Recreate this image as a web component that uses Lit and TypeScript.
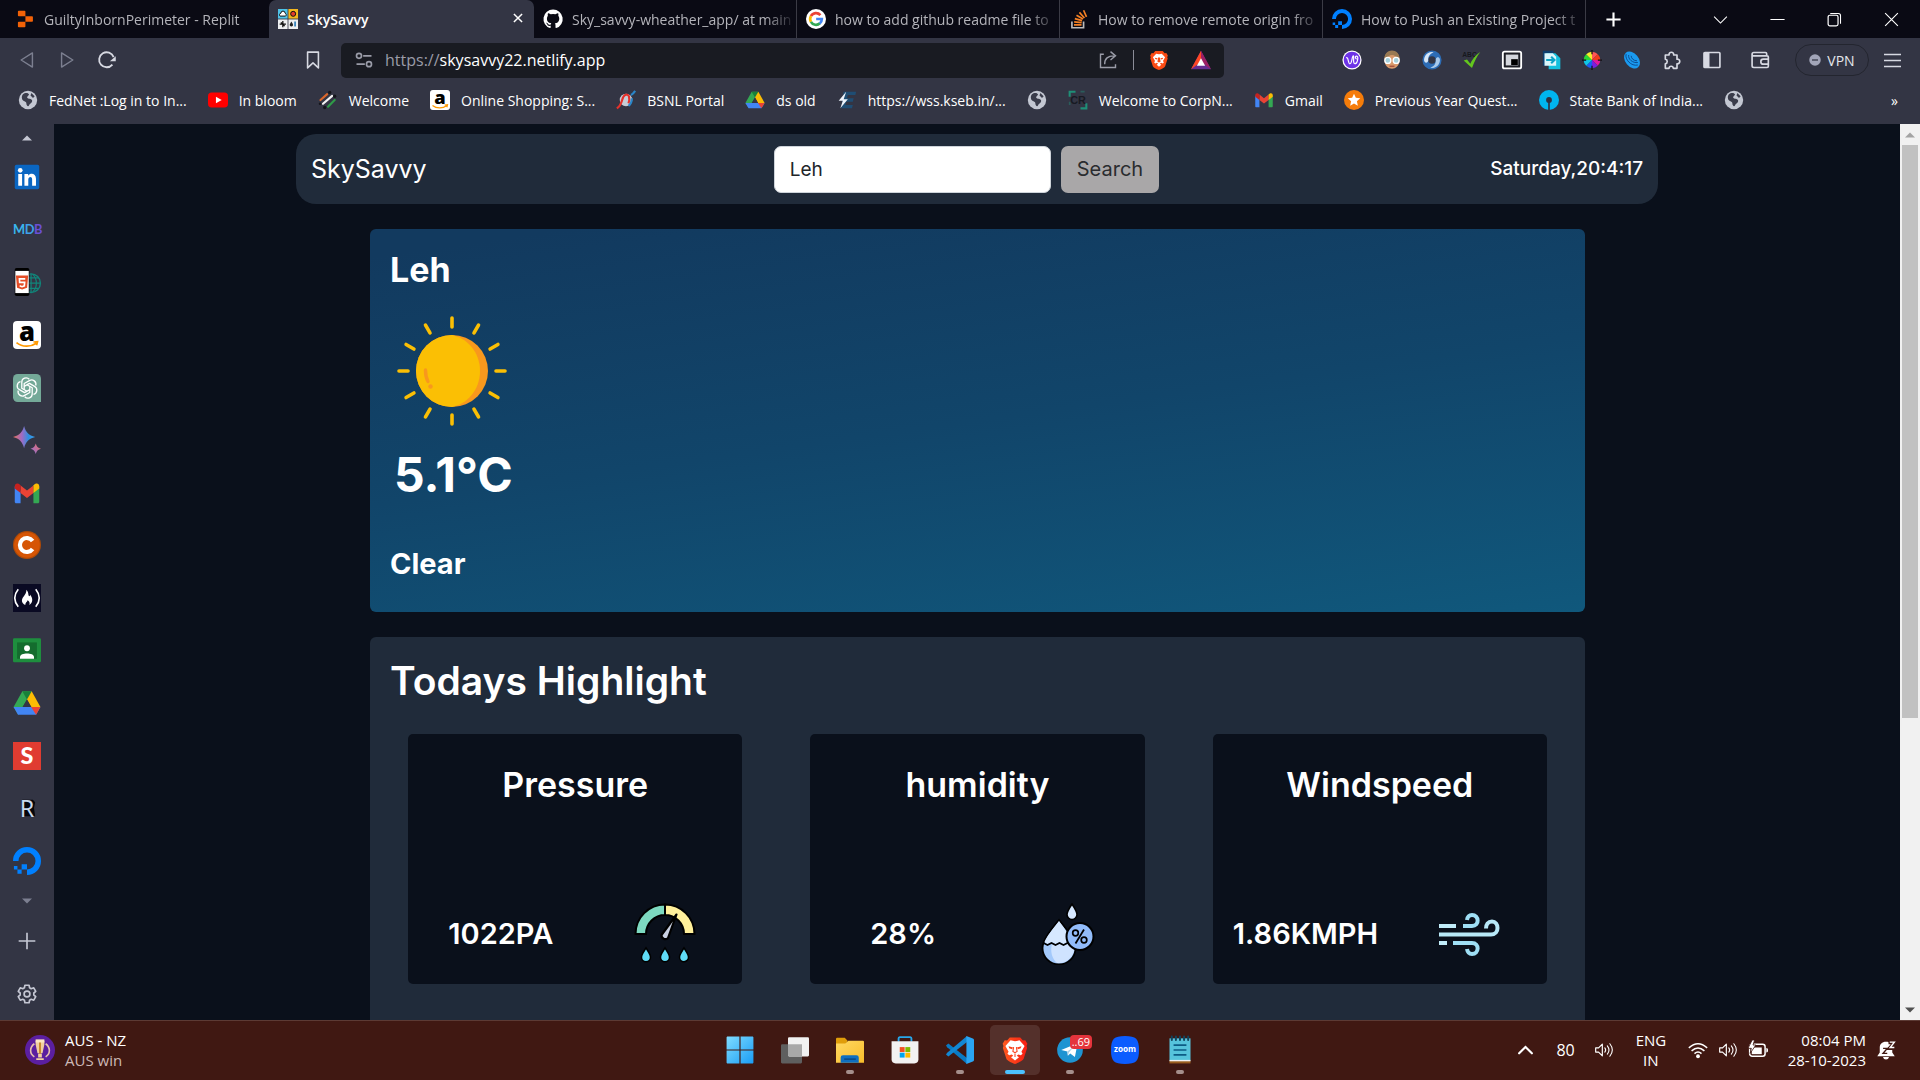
import { LitElement, html, svg, css, nothing } from "lit";
import { customElement, property } from "lit/decorators.js";

/* ---------- icon library: every entry is drawn in a 24 x 24 box ---------- */
const globe = svg`<circle cx="12" cy="12" r="11" fill="#c3c7d2"/><path d="M6 5c2-2 6-2 7 0 1 1-2 2-2 4s6 1 6 4-3 3-4 6c-1 1-3 0-3-3s-4-2-5-5 0-5 1-6Z" fill="#3a3c4b"/><path d="M16 3.500l4 4-2 2-3-3Z" fill="#3a3c4b"/>`;
const amazon = svg`<rect width="24" height="24" rx="3.500" fill="#fff"/><text x="12" y="17" font-size="22" font-weight="800" text-anchor="middle" fill="#000" font-family="Open Sans, sans-serif">a</text><path d="M3 18.500c5 4 12 4 17 .5M17.500 18l3.500-.3-.8 3" fill="none" stroke="#f90" stroke-width="1.500"/>`;
const drive = svg`<path d="M8 2h8l-8 14-3.500 6L.5 15.500Z" fill="#34a853"/><path d="M8 2h8l-4 7Z" fill="#188038"/><path d="M16 2l7.500 13.500h-8L12 9Z" fill="#fbbc04"/><path d="M.5 15.500h23L19.800 22H4.300Z" fill="#4285f4"/><path d="M15.500 15.500h8L19.800 22Z" fill="#ea4335"/><path d="M12 9l3.800 6.500H8.200Z" fill="#333544"/>`;
const gmail = svg`<path d="M1.500 6.500v13c0 .8.500 1.300 1.300 1.300H6.500V10Z" fill="#4285f4"/><path d="M22.500 6.500v13c0 .8-.5 1.300-1.300 1.300H17.500V10Z" fill="#34a853"/><path d="M6.500 5.500 12 9.800l5.500-4.300V12L12 16.200 6.500 12Z" fill="#ea4335"/><path d="M1.500 6.300C1.500 3.500 4.400 2.800 6.500 5.500V12l-5-3.800Z" fill="#c5221f"/><path d="M22.500 6.300c0-2.800-2.900-3.500-5-.8V12l5-3.800Z" fill="#fbbc04"/>`;
const ocean = svg`<path d="M12 24v-4.700A7.300 7.300 0 1 0 4.700 12H0A12 12 0 1 1 12 24Z" fill="#0080ff"/><path d="M7.400 14.700H12v4.600H7.400ZM3.800 19.300h3.600v3.600H3.800ZM.8 16.200h3v3.100h-3Z" fill="#0080ff"/>`;
const braveShape = "M7.500 1.200h9l2.300 2.600 2-.2 1.800 3-.7 2 .5 1.700-3 9.200c-.5 1.400-4 3.300-7.400 4.500-3.400-1.200-6.900-3.100-7.400-4.500l-3-9.200.5-1.700-.7-2 1.800-3 2 .2Z";
const brave = svg`<path d=${braveShape} fill="#fb4b14"/><path d="M12 5.200l3.300-.7 4 4.300-2.500 4.500 1 1.700-1.200 1.200-2.200-.8-1.300 1.100 1.700 1.300-2.800 2.300-2.800-2.300 1.700-1.300-1.300-1.100-2.200.8-1.200-1.200 1-1.700-2.500-4.500 4-4.300Z" fill="#fff"/><path d="M7 9.200l3.300.8-.8 1.300-2-.5ZM17 9.200l-3.300.8.8 1.300 2-.5ZM10.900 9h2.200l.8 5-1.900 1-1.900-1Z" fill="#fb4b14"/>`;
const speaker = svg`<path d="M2 9.500h3.500L10 5v14l-4.500-4.500H2Z" fill="none" stroke="currentColor" stroke-width="1.400" stroke-linejoin="round"/><path d="M13 9.500q2 2.500 0 5M16 7q4 5 0 10M19 4.500q6 7.500 0 15" fill="none" stroke="currentColor" stroke-width="1.300" stroke-linecap="round"/>`;

const ICONS: Record<string, unknown> = {
  globe, amazon, drive, gmail, ocean, brave, speaker,
  replit: svg`<path d="M4.500 2h7c.6 0 1 .4 1 1v5.700h-8c-.6 0-1-.4-1-1V3c0-.6.400-1 1-1ZM12.500 8.700h8c.6 0 1 .4 1 1v4.700c0 .6-.4 1-1 1h-8ZM4.500 15.400h8V21c0 .6-.4 1-1 1h-7c-.6 0-1-.4-1-1v-4.700c0-.6.400-.9 1-.9Z" fill="#f26207"/>`,
  savvy: svg`<rect x="0" y="0" width="11.500" height="11.500" fill="#4fc3e8"/><rect x="12.500" y="0" width="11.500" height="11.500" fill="#f3b61f"/><rect y="12.500" width="11.500" height="11.500" fill="#eef0f2"/><rect x="12.500" y="12.500" width="11.500" height="11.500" fill="#eef0f2"/><path d="M2.500 8.500a2 2 0 0 1 1-3.500 2.500 2.500 0 0 1 5 0 2 2 0 0 1 .5 3.500Z" fill="#fff" stroke="#111" stroke-width="1.200"/><circle cx="18.200" cy="5.800" r="3" fill="#e53a2a" stroke="#111" stroke-width="1.200"/><path d="M5.800 14.500v7.500M2 18.200h7.500M3.500 16l4.500 4.500" stroke="#111" stroke-width="1.500"/><path d="M16 15l1.800 3a2 2 0 1 1-3.500 0Z" fill="#222"/><path d="M20.500 15v6" stroke="#2b7db8" stroke-width="2"/>`,
  github: svg`<path d="M12 .5A11.500 11.500 0 0 0 8.400 22.900c.6.100.8-.3.800-.6v-2.100c-3.200.7-3.900-1.400-3.900-1.400-.5-1.300-1.300-1.700-1.300-1.700-1-.7.100-.7.100-.7 1.200.1 1.800 1.200 1.800 1.200 1 1.800 2.700 1.300 3.400 1 .1-.8.400-1.300.7-1.600-2.600-.3-5.300-1.300-5.300-5.700 0-1.300.5-2.300 1.200-3.100-.1-.3-.5-1.500.1-3.100 0 0 1-.3 3.200 1.200a11 11 0 0 1 5.800 0c2.200-1.500 3.200-1.200 3.200-1.200.6 1.600.2 2.800.1 3.100.8.800 1.200 1.900 1.200 3.100 0 4.500-2.700 5.400-5.300 5.700.4.400.8 1.100.8 2.200v3.100c0 .3.200.7.800.6A11.500 11.500 0 0 0 12 .5Z" fill="#fff"/>`,
  google: svg`<circle cx="12" cy="12" r="12" fill="#fff"/><g fill="none" stroke-width="3.200"><path d="M17.300 7.300A7 7 0 0 0 5.900 8.600" stroke="#ea4335"/><path d="M5.900 8.600a7 7 0 0 0 0 6.800" stroke="#fbbc04"/><path d="M5.900 15.400A7 7 0 0 0 16.700 17.200" stroke="#34a853"/><path d="M16.500 17.300A7 7 0 0 0 19 12h-6.800" stroke="#4285f4"/></g>`,
  stack: svg`<path d="M3.500 15v7.500h14V15" fill="none" stroke="#bcbbbb" stroke-width="2"/><path d="M6 19h9M6.200 15.500l9 .9M7 11.500l8.700 2.400M9 7.500l7.800 4.500M12.500 4l6 6.800M17.500 1.500l3.500 8" stroke="#f48024" stroke-width="2"/>`,
  close: svg`<path d="M5 5l14 14M19 5 5 19" stroke="currentColor" stroke-width="2.600"/>`,
  plus: svg`<path d="M12 2v20M2 12h20" stroke="currentColor" stroke-width="3"/>`,
  thinPlus: svg`<path d="M12 2v20M2 12h20" stroke="currentColor" stroke-width="2"/>`,
  chevDown: svg`<path d="M3 8l9 9 9-9" fill="none" stroke="currentColor" stroke-width="1.500"/>`,
  chevUp: svg`<path d="M3 16l9-9 9 9" fill="none" stroke="currentColor" stroke-width="3" stroke-linecap="round"/>`,
  minimise: svg`<path d="M2 12h20" stroke="currentColor" stroke-width="1.500"/>`,
  restore: svg`<rect x="3" y="6" width="14" height="15" rx="2.500" fill="none" stroke="currentColor" stroke-width="1.700"/><path d="M6 3.500h11.500a3 3 0 0 1 3 3V18" fill="none" stroke="currentColor" stroke-width="1.500"/>`,
  shut: svg`<path d="M3 3l18 18M21 3 3 21" stroke="currentColor" stroke-width="1.600"/>`,
  back: svg`<path d="M18.500 3.500v17L5 12Z" fill="none" stroke="currentColor" stroke-width="1.700" stroke-linejoin="round"/>`,
  forward: svg`<path d="M5.500 3.500v17L19 12Z" fill="none" stroke="currentColor" stroke-width="1.700" stroke-linejoin="round"/>`,
  reload: svg`<path d="M18.500 17.500A9 9 0 1 1 20 8.500" fill="none" stroke="currentColor" stroke-width="2.200"/><path d="M22.500 7.500v6h-7Z" fill="currentColor"/>`,
  bookmark: svg`<path d="M5.500 2.500h13v19L12 15.500l-6.500 6Z" fill="none" stroke="currentColor" stroke-width="1.900" stroke-linejoin="round"/>`,
  site: svg`<g fill="none" stroke="currentColor" stroke-width="2"><circle cx="6" cy="7" r="3"/><path d="M11 7h10M3 17h10"/><circle cx="18" cy="17" r="3"/></g>`,
  share: svg`<g fill="none" stroke="currentColor" stroke-width="1.700"><path d="M7 5H3v16h18v-4"/><path d="M8 17c0-7 4-10 11-10M15 2l6 5-6 5"/></g>`,
  bat: svg`<path d="M12 1 0 23h24Z" fill="#662d91"/><path d="M12 1 0 23l12-9Z" fill="#ff4724"/><path d="M12 1l12 22-12-9Z" fill="#9e1f63"/><path d="M12 10l-5 9h10Z" fill="#fff"/>`,
  wave: svg`<circle cx="12" cy="12" r="11.500" fill="#fff"/><circle cx="12" cy="12" r="10" fill="#6d33e6"/><path d="M5 9.500c3-2 2 7 4.500 7S12 7 13.500 7s-1 9.500 2 9.500 4.500-8 2.500-9-3 2-.5 3.500" fill="none" stroke="#fff" stroke-width="1.400"/>`,
  face: svg`<path d="M3 12C2-2 22-2 21 12c0 14-18 14-18 0Z" fill="#d99a6c"/><path d="M3 11C2-3 22-3 21 11c-4-3-6-5-9-5s-5 2-9 5Z" fill="#9a7a53"/><circle cx="7" cy="12.500" r="3.600" fill="#a4d0dc" stroke="#fff" stroke-width="1.600"/><circle cx="17" cy="12.500" r="3.600" fill="#a4d0dc" stroke="#fff" stroke-width="1.600"/><path d="M9 19.500h6" stroke="#a04a3a" stroke-width="1.500"/>`,
  ring: svg`<circle cx="12" cy="12" r="8" fill="none" stroke="#2d6cb5" stroke-width="7"/><path d="M2.500 13A9.500 9.500 0 0 1 14 2.700C9 5 7 8 7.500 13c-1 3-4 3-5 0Z" fill="#d6e6f7"/><path d="M21.500 11A9.500 9.500 0 0 1 10 21.300c5-2.300 7-5.300 6.500-10.300 1-3 4-3 5 0Z" fill="#a9c9ea"/>`,
  abc: svg`<text x="9" y="8" font-size="8" font-weight="700" text-anchor="middle" fill="#16181d" font-family="Liberation Sans, sans-serif">ABC</text><path d="M2 12.500l4-1 4 5c3-6 6-10 12-14-4 5-7 11-10 19Z" fill="#63c61e"/>`,
  pip: svg`<rect x="1" y="2" width="22" height="20" rx="2" fill="#1c1d24" stroke="#fff" stroke-width="2.200"/><rect x="4.500" y="5.500" width="15" height="13" fill="#d4d6dc"/><rect x="11" y="11" width="8" height="7" fill="#000"/>`,
  sendPage: svg`<path d="M1 1h13v6h-8v12H1Z" fill="#0c3f6e"/><path d="M5 4h11l6 6v13H8V17H5Z" fill="#12c1df"/><path d="M3 4h10l4 4v11H3Z" fill="#d9f6fb"/><path d="M5 12h9M11 8l4 4-4 4" fill="none" stroke="#0aa5c8" stroke-width="2.500"/>`,
  wheel: svg`<path d="M12 12V2a10 10 0 0 1 7 3Z" fill="#f55"/><path d="M12 12l7-7a10 10 0 0 1 3 7Z" fill="#f33a1c"/><path d="M12 12h10a10 10 0 0 1-3 7Z" fill="#e0189c"/><path d="M12 12l7 7a10 10 0 0 1-7 3Z" fill="#7a1fe0"/><path d="M12 12v10a10 10 0 0 1-7-3Z" fill="#1b5cf0"/><path d="M12 12l-7 7a10 10 0 0 1-3-7Z" fill="#10c6e6"/><path d="M12 12H2a10 10 0 0 1 3-7Z" fill="#2bd834"/><path d="M12 12 5 5a10 10 0 0 1 7-3Z" fill="#f4ee2c"/><path d="M12 0v5M12 19v5M0 12h5M19 12h5" stroke="#111" stroke-width="1.500"/>`,
  dish: svg`<ellipse cx="12" cy="12" rx="11.500" ry="8" fill="#1a9af0" transform="rotate(50 12 12)"/><path d="M5 5c-2 6 6 15 14 13M8 6c-1 5 5 10 11 9M11 7c0 3 3 6 7 6" fill="none" stroke="#0c4f94" stroke-width="1.200"/>`,
  puzzle: svg`<path d="M4 6h4.500a2.800 2.800 0 1 1 5.500 0H18v5a2.800 2.800 0 1 1 0 5.500V22h-4.500a2.500 2.500 0 0 0-5 0H4v-5.500a2.800 2.800 0 0 0 0-5.500Z" fill="none" stroke="currentColor" stroke-width="2" stroke-linejoin="round"/>`,
  panel: svg`<rect x="2.500" y="3" width="19" height="18" rx="1" fill="none" stroke="currentColor" stroke-width="2"/><path d="M2 3h7v18H2Z" fill="currentColor"/>`,
  wallet: svg`<g fill="none" stroke="currentColor" stroke-width="2"><path d="M20 7V4.500A1.500 1.500 0 0 0 18.500 3H4.500a2 2 0 0 0 0 4H20.500a1.500 1.500 0 0 1 1.500 1.500v11a1.500 1.500 0 0 1-1.500 1.500h-16A2 2 0 0 1 2.500 19V5"/><path d="M22 11h-6a3 3 0 0 0 0 6h6"/></g>`,
  vpnDot: svg`<circle cx="12" cy="12" r="11.500" fill="#a2a5b8"/><path d="M6 12h12" stroke="#333544" stroke-width="2.500"/>`,
  menu: svg`<path d="M0 3.500h24M0 12h24M0 20.500h24" stroke="currentColor" stroke-width="2"/>`,
  youtube: svg`<rect x="0" y="3" width="24" height="18" rx="4.500" fill="#f00"/><path d="M9.500 8l7 4-7 4Z" fill="#fff"/>`,
  bars: svg`<g stroke-linecap="round" stroke-width="2.600"><path d="M3 12 11 5" stroke="#d9662b"/><path d="M6 16.500 17 7" stroke="#f3f3f3"/><path d="M12 20l8-8" stroke="#2f9a48"/></g><circle cx="14" cy="3" r="2" fill="#15161c"/><circle cx="20" cy="7.500" r="2" fill="#15161c"/><circle cx="8" cy="21" r="2" fill="#15161c"/><circle cx="2.500" cy="16.500" r="1.600" fill="#15161c"/>`,
  bsnl: svg`<circle cx="12" cy="12" r="7.500" fill="#c6ccd6"/><path d="M1 22C9 17 6 8 11 6c5-2 6 4 4 10" fill="none" stroke="#e3312b" stroke-width="2.600"/><path d="M23 1c-2 3-3 4-5 5M15 19c3-2 4-5 4-9" fill="none" stroke="#2a86c9" stroke-width="2.600"/>`,
  kseb: svg`<path d="M8 2h15l-1 4h-9l-1 4h8l-1 4h-8l-1 4h9l-1 4H5Z" fill="#1f4d73"/><path d="M11 2 2 13h5L4 22l9-11H8Z" fill="#eef4fb"/>`,
  corp: svg`<path d="M2 8V2h7M22 16v6h-7" fill="none" stroke="#1f8f77" stroke-width="2.500"/><path d="M15 2h5M2 14v4" stroke="#2a5c5b" stroke-width="2"/><text x="12" y="17" font-size="13" font-weight="700" text-anchor="middle" fill="#171a22" font-family="Liberation Sans, sans-serif">CR</text>`,
  star: svg`<circle cx="12" cy="12" r="12" fill="#f57c0a"/><path d="M12 4.500l2.200 4.900 5.300.6-4 3.600 1.100 5.300L12 16.200l-4.600 2.700 1.100-5.300-4-3.600 5.300-.6Z" fill="#fff"/>`,
  sbi: svg`<circle cx="12" cy="12" r="12" fill="#00b5ef"/><circle cx="12" cy="12" r="3.500" fill="#2f3142"/><path d="M11 13h2v11h-2Z" fill="#2f3142"/>`,
  linkedin: svg`<rect x="1.500" y="1.500" width="21" height="21" rx="1.500" fill="#0a66c2"/><circle cx="6.200" cy="6.300" r="2" fill="#fff"/><path d="M4.500 9.500h3.300v10H4.500ZM9.800 9.500H13v1.400c1.800-2.600 6.700-2.200 6.700 2.600v6h-3.300v-5.300c0-3-3.300-2.600-3.300 0v5.300H9.800Z" fill="#fff"/>`,
  mdb: svg`<g font-size="11" font-weight="700" font-family="Liberation Sans Narrow, Lato, sans-serif"><text x="0" y="15" fill="#39b6ee">M</text><text x="10" y="15" fill="#3fa0ea">D</text><text x="18" y="15" fill="#6a4fd6">B</text></g>`,
  html5: svg`<circle cx="15.500" cy="13" r="8" fill="none" stroke="#11857a" stroke-width="1.200"/><path d="M15.500 5v16M8 13h15.500M17 5.500c4 4 4 11 0 15M10 8.500h12M10 17.500h12" fill="none" stroke="#11857a" stroke-width="1"/><rect x="1.500" y="0" width="12.500" height="24" rx="1.500" fill="#000"/><rect x="2" y="2.500" width="11.500" height="19" fill="#fff"/><path d="M2.500 6.500h10.500l-.9 10.500-4.300 1.500L3.500 17Z" fill="#e44d26"/><path d="M10.500 9.300H5.500l.2 3h4.300l-.3 3-2 .7-2-.7" fill="none" stroke="#fff" stroke-width="1.400"/>`,
  gpt: svg`<path d="M4 0h16a4 4 0 0 1 4 4v20H4a4 4 0 0 1-4-4V4a4 4 0 0 1 4-4Z" fill="#74a998"/><g fill="none" stroke="#fff" stroke-width="1.100" stroke-linejoin="round">${[0, 60, 120, 180, 240, 300].map(a => svg`<path d="M9.600 13.400V8.200L14 5.700a3.700 3.700 0 0 1 5.500 4.200" transform=${`rotate(${a} 12 12)`}/>`)}</g>`,
  spark: svg`<defs><linearGradient id="sp" x1="0" y1="0" x2="1" y2="0"><stop offset="0" stop-color="#e8705a"/><stop offset=".4" stop-color="#a06bc4"/><stop offset=".7" stop-color="#2f8fe0"/><stop offset="1" stop-color="#3aa0ee"/></linearGradient><linearGradient id="sq" x1="0" y1="1" x2="1" y2="0"><stop offset="0" stop-color="#8a72e0"/><stop offset="1" stop-color="#ef6b62"/></linearGradient></defs><path d="M9.500 0c1.500 5.500 4 8 9.500 9.500-5.500 1.500-8 4-9.500 9.500C8 13.500 5.500 11 0 9.500 5.500 8 8 5.500 9.500 0Z" fill="url(#sp)"/><path d="M19.500 15c.8 2.800 1.800 3.800 4.500 4.500-2.700.8-3.700 1.800-4.500 4.500-.8-2.700-1.800-3.700-4.500-4.500 2.700-.7 3.700-1.700 4.500-4.500Z" fill="url(#sq)"/>`,
  cred: svg`<circle cx="12" cy="12" r="12" fill="#b04a06"/><circle cx="12" cy="12" r="11" fill="#d65505"/><path d="M16.800 8.500A6 6 0 1 0 16.800 15.500" fill="none" stroke="#fff" stroke-width="3.600"/>`,
  fcc: svg`<rect width="24" height="24" fill="#0a0a23"/><path d="M4.500 4.500q-6 7.500 0 15M19.500 4.500q6 7.500 0 15" fill="none" stroke="#fff" stroke-width="1.400"/><path d="M11.500 5c2.500 3 1 4.500 2.500 5.500 1-.5.500-1.500.5-1.500 3 3.500 2.500 7-.5 9 .8-2-.3-3.300-1.500-4-.3 1.500-2 2-2 4C7 16.500 7 13.500 9 11c1.500-2 2.500-3.500 2.500-6Z" fill="#fff"/>`,
  classroom: svg`<rect x="0" y="2" width="24" height="20.500" rx="1" fill="#1e8e3e"/><rect x="3.500" y="5.500" width="17" height="14" fill="#146c2e"/><circle cx="12" cy="10.500" r="2.500" fill="#fff"/><path d="M6 19.500v-1.500c0-4 12-4 12 0v1.500Z" fill="#fff"/>`,
  sTile: svg`<rect width="24" height="24" fill="#e03c31"/><text x="12" y="19.200" font-size="20" font-weight="900" text-anchor="middle" fill="#fff" font-family="Lato, sans-serif">S</text>`,
  rTile: svg`<path d="M8 5h9l2 2-1 5 1 7H8Z" fill="#05060a"/><text x="12" y="19.500" font-size="20" text-anchor="middle" fill="#c9d9ee" font-family="Noto Sans, sans-serif">R</text>`,
  gear: svg`<g fill="none" stroke="currentColor" stroke-width="2" stroke-linejoin="round"><path d="M9.500 1.500h5l.6 3 2 1.200 3-1.100 2.400 4.200-2.300 2v2.400l2.300 2-2.400 4.200-3-1.100-2 1.200-.6 3h-5l-.6-3-2-1.200-3 1.100L1.500 15.200l2.300-2v-2.400l-2.300-2 2.400-4.200 3 1.100 2-1.200Z"/><circle cx="12" cy="12" r="3.500"/></g>`,
  triUp: svg`<path d="M12 7l10 10H2Z" fill="currentColor"/>`,
  triDown: svg`<path d="M12 17l10-10H2Z" fill="currentColor"/>`,
  cup: svg`<circle cx="12" cy="12" r="12" fill="#5b1fa0"/><path d="M8.500 4.500h7v3l-1.500 7h-4l-1.500-7ZM10.500 15h3v3h-3ZM9 18.500h6v1.500H9Z" fill="#f0cfa0"/><path d="M8.500 3.500h7V6h-7Z" fill="#fbe6c0"/><path d="M12 6v9" stroke="#c98a2e" stroke-width="1.600"/><path d="M7.500 7c-4 3-4 8 0 10.500M16.500 7c4 3 4 8 0 10.500" fill="none" stroke="#e5bfae" stroke-width="1.300"/>`,
  windows: svg`<defs><linearGradient id="wn" x1="0" y1="0" x2="1" y2="1"><stop offset="0" stop-color="#7fdcff"/><stop offset="1" stop-color="#1a9df5"/></linearGradient></defs><path d="M1 .5h10.500v11H.5V1ZM12.500 .5H23l.5.500v10.500h-11ZM.5 12.500h11v11H1l-.5-.5ZM12.500 12.500h11V23l-.5.500H12.500Z" fill="url(#wn)"/>`,
  taskview: svg`<rect x="0" y="7" width="18" height="16.500" rx="1" fill="#5f5f5f"/><rect x="6" y="1" width="18" height="16.500" rx="1" fill="#f1f1f1"/><path d="M6 7h12v10.500H7a1 1 0 0 1-1-1Z" fill="#a8a8a8"/>`,
  folder: svg`<defs><linearGradient id="fo" x1="0" y1="0" x2="1" y2="1"><stop offset="0" stop-color="#ffd862"/><stop offset="1" stop-color="#f9bd2b"/></linearGradient></defs><path d="M0 2.500a1 1 0 0 1 1-1h6.500l2.500 2.500-2 4H0Z" fill="#e09d0a"/><path d="M0 6.500h8L10.500 4H23a1 1 0 0 1 1 1v18H0Z" fill="url(#fo)"/><path d="M4 23v-4.500a2 2 0 0 1 2-2h11.500a2 2 0 0 1 2 2V23Z" fill="#0f6fc0"/><path d="M7 19.800h10" stroke="#083d72" stroke-width="1"/>`,
  store: svg`<path d="M6.500 5V2.200A1.200 1.200 0 0 1 7.500 1h9a1.200 1.200 0 0 1 1 1.200V5" fill="none" stroke="#27a7ea" stroke-width="1.600"/><path d="M.5 4.500h23V20a3.500 3.500 0 0 1-3.500 3.500H4A3.500 3.500 0 0 1 .5 20Z" fill="#f2f2f2"/><path d="M7.500 9.500h4.200v4.200H7.500Z" fill="#f25022"/><path d="M12.300 9.500h4.200v4.200h-4.200Z" fill="#7fba00"/><path d="M7.500 14.300h4.200v4.200H7.500Z" fill="#00a4ef"/><path d="M12.300 14.300h4.200v4.200h-4.200Z" fill="#ffb900"/>`,
  vscode: svg`<path d="M0 8.200 2 6.500l16 12.300V24L1 9.600Z" fill="#0a7ac4"/><path d="M0 15.800 2 17.500 18 5.200V0L1 14.400Z" fill="#1287d3"/><path d="M17.500 0 23 2.200a1.500 1.500 0 0 1 1 1.300v17a1.500 1.500 0 0 1-1 1.300L17.500 24Z" fill="#2aa5f3"/>`,
  braveBig: svg`<defs><linearGradient id="bv" x1="0" y1="0" x2="1" y2="0"><stop offset="0" stop-color="#ff5a1f"/><stop offset="1" stop-color="#f81b12"/></linearGradient></defs><path d=${braveShape} fill="url(#bv)"/><path d="M12 4.600l3.800-.9 4.400 4.800-2.700 5 1 1.700-1.500 1.400-2.200-.8-1.300 1.100 1.900 1.400L12 21l-3.400-2.700 1.900-1.400-1.300-1.100-2.200.8-1.500-1.400 1-1.700-2.700-5 4.400-4.800Z" fill="#fff"/><path d="M6.500 8.800l3.800 1-.8 1.500-2.500-.7ZM17.500 8.800l-3.800 1 .8 1.500 2.500-.7Z" fill="#f8401a"/><path d="M10.800 9.500l-.6 3.800 1.800 1 1.800-1-.6-3.800M12 15v3" fill="none" stroke="#f8401a" stroke-width=".9"/>`,
  telegram: svg`<circle cx="12" cy="12" r="11" fill="#1f94d2"/><path d="M4.500 12 18.500 6.300 16.200 18l-4-3-2 2-.5-3.800Z" fill="#fff"/><path d="M9.700 13.200 15.500 9l-4.500 5.200-.8 2.800Z" fill="#a9cfe6"/>`,
  zoomApp: svg`<path d="M12 0c9.500 0 12 2.500 12 12s-2.500 12-12 12S0 21.500 0 12 2.500 0 12 0Z" fill="#0b5cff"/><text x="12" y="14" font-size="7" font-weight="700" text-anchor="middle" fill="#fff" font-family="Open Sans, sans-serif">zoom</text>`,
  notepad: svg`<path d="M3 21h18v2.500H3Z" fill="#9a5c1d"/><path d="M3 2h18v19H3Z" fill="#56c3dc"/><path d="M3 20.500h18v1.200H3Z" fill="#f2f2f2"/><path d="M6.500 7.800h11M6.500 12h11M6.500 16.200h11" stroke="#0d5c85" stroke-width="1.400"/><path d="M5 .5v3M8.500 .5v3M12 .5v3M15.500 .5v3M19 .5v3" stroke="#12435c" stroke-width="1.700" stroke-linecap="round"/>`,
  wifi: svg`<g fill="none" stroke="currentColor" stroke-width="1.800"><path d="M1 9.500q11-10 22 0"/><path d="M4.300 13q7.700-7 15.400 0"/><path d="M7.800 16.300q4.200-3.800 8.400 0"/></g><circle cx="12" cy="19.500" r="2.300" fill="currentColor"/>`,
  battery: svg`<rect x="2" y="5" width="18.500" height="14.500" rx="3" fill="none" stroke="currentColor" stroke-width="1.800"/><path d="M22 9.500c1.500 0 2 1 2 2.800S23.500 15 22 15Z" fill="currentColor"/><path d="M4.500 9h12v8h-12Z" fill="currentColor"/><path d="M5 0 0 10h4l-1.500 6L9.500 6H6l2-6Z" fill="currentColor" stroke="#401812" stroke-width="1"/>`,
  bell: svg`<path d="M12 2c-5 0-7.500 3-7.500 7v6L1.500 19.500h21l-3-4.500V9C19.500 5 17 2 12 2Z" fill="currentColor"/><path d="M8.500 20.500h7c-.5 4-6.500 4-7 0Z" fill="currentColor"/><path d="M15 3h7l-6 7h6" fill="none" stroke="#401812" stroke-width="4"/><path d="M16.500 2.500H22l-5 6.500h5" fill="none" stroke="currentColor" stroke-width="1.700"/><path d="M8.500 10h5l-5 6h5" fill="none" stroke="#401812" stroke-width="1.700"/>`,
};

@customElement("ui-icon")
export class UiIcon extends LitElement {
  @property() name = "";
  static styles = css`
    :host { display: inline-flex; flex: none; width: 20px; height: 20px; }
    svg { display: block; width: 100%; height: 100%; overflow: visible; }
  `;
  render() {
    return html`<svg viewBox="0 0 24 24" aria-hidden="true">${ICONS[this.name] ?? nothing}</svg>`;
  }
}

/* ---------- weather drawings ---------- */
const drop = (x: number, y: number) =>
  svg`<path d=${`M${x} ${y}c2.500 4 4.500 6.500 4.500 9.200a4.500 4.500 0 0 1-9 0c0-2.700 2-5.200 4.500-9.200Z`} fill="#5fdcf7" stroke="#000" stroke-width="1.500"/>`;

const WEATHER: Record<string, unknown> = {
  sun: svg`<svg viewBox="0 0 112 112" width="112" height="112" role="img" aria-label="Clear sky">
    <g stroke="#fbbf04" stroke-width="3.600" stroke-linecap="round">
      ${Array.from({ length: 12 }, (_, i) => svg`<path d="M56 3v9" transform=${`rotate(${i * 30} 56 56)`}/>`)}
    </g>
    <circle cx="56" cy="56" r="36" fill="#f8981d"/>
    <path d="M56 20a36 36 0 1 0 0 72c15-3 28-17 28-36S71 23 56 20Z" fill="#fbbf04"/>
    <path d="M29.500 55q0 7 2.500 11.500" fill="none" stroke="#f8981d" stroke-width="3.400" stroke-linecap="round"/>
    <circle cx="34.500" cy="71.500" r="2.200" fill="#f8981d"/></svg>`,
  pressure: svg`<svg viewBox="0 0 62 62" width="62" height="62" aria-hidden="true">
    <path d="M31 1.500A29.500 29.500 0 0 0 1.500 31H12a19 19 0 0 1 19-19Z" fill="#7dd9c0" stroke="#000" stroke-width="2"/>
    <path d="M31 1.500A29.500 29.500 0 0 1 60.500 31H50A19 19 0 0 0 31 12Z" fill="#fff09b" stroke="#000" stroke-width="2"/>
    <path d="M42.500 11.500 27.500 32a3.800 3.800 0 0 0 6.500 3Z" fill="#c8cfe0" stroke="#000" stroke-width="2.200" stroke-linejoin="round"/>
    ${drop(12, 45)}${drop(31, 45)}${drop(50, 45)}</svg>`,
  humidity: svg`<svg viewBox="0 0 62 62" width="62" height="62" aria-hidden="true">
    <path d="M22 17C13 28 5.500 37 5.500 45a16.500 16.500 0 0 0 33 0C38.500 37 31 28 22 17Z" fill="#a3c9fb" stroke="#000" stroke-width="1.800"/>
    <path d="M22 18c-7 9-12 15-14.500 21l3 2 4-2 4 2 4-2 4 2 4-2 3 1.500C33 33 28 26 22 18Z" fill="#d6e8ff"/>
    <path d="M15 41c-2 7 0 15 5 19 10 1 16-6 17.500-14l-1-5-4-1-4 1.500-4-1.500-4 1.500Z" fill="#cfe3ff"/>
    <path d="M6.500 40l4 2 4-2 4 2 4-2 4 2 4-2 4 2" fill="none" stroke="#000" stroke-width="1.600"/>
    <path d="M35 1c3 4.500 5 7.500 5 10.500a5 5 0 0 1-10 0C30 8.500 32 5.500 35 1Z" fill="#d6e8ff" stroke="#000" stroke-width="1.600"/>
    <circle cx="43" cy="33.500" r="13.500" fill="#92bcfa" stroke="#000" stroke-width="2"/>
    <circle cx="38.500" cy="30" r="2.800" fill="none" stroke="#000" stroke-width="1.700"/>
    <circle cx="47" cy="37" r="2.800" fill="none" stroke="#000" stroke-width="1.700"/>
    <path d="M47 26.500 38.500 40.500" stroke="#000" stroke-width="1.800"/></svg>`,
  wind: svg`<svg viewBox="0 0 62 62" width="62" height="62" aria-hidden="true">
    <g fill="none" stroke="#9fdff5" stroke-width="4">
      <path d="M0 23h17" stroke="#c0ecf9"/><path d="M0 31.500h52c9 0 8-13 1-13-4 0-6 3-6 7" stroke="#b8e9f8"/>
      <path d="M0 40h8" stroke="#c0ecf9"/>
      <path d="M24 23h9c8 0 7-11 0-11-3 0-4.500 2-5 5"/>
      <path d="M14 40h19c8 0 7 11 0 11-3 0-4.500-2-5-5"/></g></svg>`,
};

@customElement("metric-card")
export class MetricCard extends LitElement {
  @property() label = "";
  @property() value = "";
  @property() art = "";
  static styles = css`
    :host { display: flex; flex-direction: column; justify-content: space-between; height: 250px; border-radius: 5px; background: #0a101b; color: #fff; }
    .title { margin: 0; padding-top: 30px; text-align: center; font-size: 34px; line-height: 42px; font-weight: 600; }
    .row { display: grid; grid-template-columns: 1fr 1fr; gap: 15px; align-items: center; justify-items: center; padding: 0 2px 19px 18px; }
    .value { font-size: 29px; line-height: 36px; font-weight: 600; white-space: nowrap; }
    svg { display: block; }
  `;
  render() {
    return html`<h3 class="title">${this.label}</h3>
      <div class="row"><span class="value">${this.value}</span>${WEATHER[this.art]}</div>`;
  }
}

@customElement("sky-page")
export class SkyPage extends LitElement {
  static styles = css`
    :host { display: block; flex: 1; min-width: 0; overflow: hidden; background: #0a101b; color: #fff; font-family: Inter, "Open Sans", sans-serif; }
    .nav { display: grid; grid-template-columns: 22fr auto 23fr; align-items: center; height: 70px; margin: 10px 242px 0; padding: 0 15px; border-radius: 20px; background: #202b3a; }
    .brand { font-size: 25px; line-height: 32px; color: inherit; text-decoration: none; }
    .search { display: flex; gap: 10px; }
    .box { box-sizing: border-box; width: 277px; height: 47px; padding: 0 15px; border: 1px solid #ced4da; border-radius: 7px; background: #fff; color: #212529; font: inherit; font-size: 19px; }
    .go { height: 47px; padding: 0 16px; border: 0; border-radius: 7px; background: #a9a7a8; color: #2a2c2f; font: inherit; font-size: 20px; }
    .clock { text-align: right; font-size: 19px; line-height: 24px; font-weight: 500; }
    .hero, .today { margin: 25px 315px 0 316px; border-radius: 6px; }
    .hero { box-sizing: border-box; height: 383px; padding: 18px 20px; background: linear-gradient(172deg, #123a5f 5%, #11456a 50%, #10587c 100%); }
    .city { margin: 0; font-size: 34px; line-height: 46px; font-weight: 700; }
    .hero svg { display: block; margin: 22px 0 18px 6px; }
    .temp { margin: 0 0 0 4px; font-size: 48px; line-height: 60px; font-weight: 700; }
    .state { margin: 39px 0 0; font-size: 29px; line-height: 40px; font-weight: 700; }
    .today { height: 520px; padding: 22px 38px; background: #202b3a; box-sizing: border-box; }
    .head { margin: 0 -18px 31px; font-size: 39px; line-height: 44px; font-weight: 600; }
    .cards { display: grid; grid-template-columns: repeat(3, 1fr); gap: 68px; }
  `;
  render() {
    return html`
      <nav class="nav">
        <a class="brand" href="#">SkySavvy</a>
        <form class="search" @submit=${(e: Event) => e.preventDefault()}>
          <input class="box" aria-label="City" value="Leh" />
          <button class="go" type="submit">Search</button>
        </form>
        <span class="clock">Saturday,20:4:17</span>
      </nav>
      <section class="hero">
        <h1 class="city">Leh</h1>
        ${WEATHER.sun}
        <p class="temp">5.1°C</p>
        <p class="state">Clear</p>
      </section>
      <section class="today">
        <h2 class="head">Todays Highlight</h2>
        <div class="cards">
          <metric-card label="Pressure" value="1022PA" art="pressure"></metric-card>
          <metric-card label="humidity" value="28%" art="humidity"></metric-card>
          <metric-card label="Windspeed" value="1.86KMPH" art="wind"></metric-card>
        </div>
      </section>`;
  }
}

const TABS = [
  { icon: "replit", text: "GuiltyInbornPerimeter - Replit" },
  { icon: "savvy", text: "SkySavvy", active: true },
  { icon: "github", text: "Sky_savvy-wheather_app/ at main" },
  { icon: "google", text: "how to add github readme file to" },
  { icon: "stack", text: "How to remove remote origin fro" },
  { icon: "ocean", text: "How to Push an Existing Project t" },
];
const EXTENSIONS = ["wave", "face", "ring", "abc", "pip", "sendPage", "wheel", "dish", "puzzle", "panel"];
const BOOKMARKS = [
  ["globe", "FedNet :Log in to In..."], ["youtube", "In bloom"], ["bars", "Welcome"], ["amazon", "Online Shopping: S..."],
  ["bsnl", "BSNL Portal"], ["drive", "ds old"], ["kseb", "https://wss.kseb.in/..."], ["globe", ""],
  ["corp", "Welcome to CorpN..."], ["gmail", "Gmail"], ["star", "Previous Year Quest..."], ["sbi", "State Bank of India..."], ["globe", ""],
];
const SIDE = ["linkedin", "mdb", "html5", "amazon", "gpt", "spark", "gmail", "cred", "fcc", "classroom", "drive", "sTile", "rTile", "ocean"];
const DOCK = [
  { icon: "windows" }, { icon: "taskview" }, { icon: "folder", run: true }, { icon: "store" }, { icon: "vscode", run: true },
  { icon: "braveBig", active: true }, { icon: "telegram", run: true, badge: "..69" }, { icon: "zoomApp" }, { icon: "notepad", run: true },
];

@customElement("app-root")
export class AppRoot extends LitElement {
  static styles = css`
    :host { display: flex; flex-direction: column; height: 100vh; overflow: hidden; background: #333544; color: #fff; font-family: "Open Sans", "Noto Sans", sans-serif; font-size: 14px; }
    button { display: inline-flex; align-items: center; justify-content: center; flex: none; padding: 0; border: 0; background: none; color: inherit; font: inherit; }
    a { color: inherit; text-decoration: none; }

    .tabs { display: flex; height: 38px; background: #0a0a14; }
    .tab { box-sizing: border-box; justify-content: flex-start; width: 263px; gap: 9px; padding-left: 9px; border-right: 1px solid #3b3b45; background: #0a0a14; color: #b4b4ba; }
    .tab:first-child { width: 269px; padding-left: 15px; border: 0; }
    .tab.on { width: 265px; border: 0; border-radius: 7px 7px 0 0; background: #333544; color: #fff; font-weight: 600; }
    .name { flex: 1; overflow: hidden; text-align: left; white-space: nowrap; }
    .fade { -webkit-mask-image: linear-gradient(90deg, #000 86%, transparent); mask-image: linear-gradient(90deg, #000 86%, transparent); }
    .shut { width: 32px; }
    .small { width: 14px; height: 14px; }
    .mid { width: 17px; height: 17px; }
    .new { width: 54px; }
    .wins { display: flex; margin-left: auto; }
    .win { width: 57px; }

    .bar { display: flex; align-items: center; height: 44px; padding: 0 8px 0 7px; color: #d7d9e2; }
    .cell { width: 40px; height: 40px; }
    .dim { color: #7c7f90; }
    .mark { width: 40px; height: 40px; margin-left: 166px; }
    .url { display: flex; align-items: center; flex: 1; min-width: 0; height: 35px; margin-left: 8px; padding: 0 13px; border-radius: 5px; background: #191b22; color: #9a9ca8; font-size: 16px; }
    .addr { flex: 1; margin-left: 11px; min-width: 0; }
    .addr b { color: #fff; font-weight: 400; }
    .rule { width: 1px; height: 20px; margin: 0 15px; background: #8b8d98; }
    .bat { margin-left: 22px; }
    .exts { display: flex; margin-left: 108px; }
    .wall { margin-left: 8px; }
    .vpn { box-sizing: border-box; width: 74px; height: 32px; gap: 6px; margin: 0 3px 0 15px; border: 1px solid #23252f; border-radius: 16px; color: #e6e7ec; }
    .dot { width: 12px; height: 12px; }

    .marks { display: flex; align-items: center; height: 36px; padding: 0 22px 6px 18px; }
    .link { display: flex; align-items: center; gap: 11px; margin-right: 21px; white-space: nowrap; }
    .more { margin-left: auto; }

    header { height: 124px; }
    .main { display: flex; flex: 1; min-height: 0; }
    .side { display: flex; flex-direction: column; width: 54px; color: #c4c6d2; }
    .arrow { height: 27px; }
    .apps { display: flex; flex-direction: column; flex: 1; }
    .app { flex: 1; }
    .big { width: 28px; height: 28px; }
    .foot { height: 53px; }
    .scroll { display: flex; flex-direction: column; align-items: center; width: 20px; background: #f1f1f1; color: #505050; }
    .step { height: 21px; }
    .rest { color: #a3a3a3; }
    .tiny { width: 12px; height: 12px; }
    .thumb { width: 16px; height: 64%; background: #c1c1c1; }
    .scroll .step:last-child { margin-top: auto; }

    .task { display: grid; grid-template-columns: 1fr auto 1fr; box-sizing: border-box; height: 60px; padding-bottom: 1px; border-top: 1px solid #5c3a34; background: #401812; font-size: 15px; }
    .widget { justify-self: start; gap: 10px; padding-left: 25px; text-align: left; line-height: 20px; }
    .cup { width: 30px; height: 30px; }
    .soft { color: #cdb9b6; }
    .dock { display: flex; align-items: center; gap: 5px; }
    .item { position: relative; width: 50px; height: 50px; border-radius: 5px; }
    .item.on { background: #54302b; }
    .dash { position: absolute; bottom: 1px; left: 21px; width: 8px; height: 4px; border-radius: 2px; background: #a58f8c; }
    .on .dash { left: 15px; width: 20px; background: #4cc2ff; }
    .badge { position: absolute; top: 10px; right: 3px; padding: 0 2px; border-radius: 4px; background: #e5343c; font-size: 11px; line-height: 14px; }
    .tray { display: flex; align-items: center; justify-content: flex-end; padding-right: 24px; line-height: 20px; }
    .lang { width: 30px; margin: 0 22px; text-align: center; }
    .net { display: flex; gap: 10px; }
    .time { margin: 0 10px 0 20px; text-align: right; }
    .eighty { margin: 0 19px 0 22px; font-size: 16px; }
  `;
  private icon(name: string, cls = "") {
    return html`<ui-icon class=${cls} name=${name}></ui-icon>`;
  }
  render() {
    return html`
      <header>
        <div class="tabs">
          ${TABS.map(t => html`<button class="tab ${t.active ? "on" : ""}">
            ${this.icon(t.icon)}<span class="name ${t.active ? "" : "fade"}">${t.text}</span>
            ${t.active ? html`<span class="shut">${this.icon("close", "small")}</span>` : nothing}
          </button>`)}
          <button class="new" aria-label="New tab">${this.icon("plus", "mid")}</button>
          <div class="wins">
            <button class="win" aria-label="Search tabs">${this.icon("chevDown", "mid")}</button>
            <button class="win" aria-label="Minimise">${this.icon("minimise", "mid")}</button>
            <button class="win" aria-label="Restore">${this.icon("restore", "mid")}</button>
            <button class="win" aria-label="Close window">${this.icon("shut", "mid")}</button>
          </div>
        </div>
        <div class="bar">
          <button class="cell dim" aria-label="Back">${this.icon("back")}</button>
          <button class="cell dim" aria-label="Forward">${this.icon("forward")}</button>
          <button class="cell" aria-label="Reload">${this.icon("reload")}</button>
          <button class="mark" aria-label="Bookmark">${this.icon("bookmark")}</button>
          <div class="url">
            ${this.icon("site")}
            <a class="addr" href="#">https://<b>skysavvy22.netlify.app</b></a>
            ${this.icon("share")}<span class="rule"></span>
            ${this.icon("brave")}${this.icon("bat", "bat")}
          </div>
          <div class="exts">
            ${EXTENSIONS.map(e => html`<button class="cell" aria-label=${e}>${this.icon(e)}</button>`)}
          </div>
          <button class="cell wall" aria-label="Wallet">${this.icon("wallet")}</button>
          <button class="vpn">${this.icon("vpnDot", "dot")}VPN</button>
          <button class="cell" aria-label="Menu">${this.icon("menu", "mid")}</button>
        </div>
        <nav class="marks">
          ${BOOKMARKS.map(([i, t]) => html`<a class="link" href="#" aria-label=${t || "Bookmark"}>${this.icon(i)}${t ? html`<span>${t}</span>` : nothing}</a>`)}
          <button class="more" aria-label="More bookmarks">»</button>
        </nav>
      </header>
      <div class="main">
        <aside class="side">
          <button class="arrow" aria-label="Scroll up">${this.icon("triUp", "tiny")}</button>
          <div class="apps">${SIDE.map(s => html`<button class="app" aria-label=${s}>${this.icon(s, "big")}</button>`)}</div>
          <button class="arrow dim" aria-label="Scroll down">${this.icon("triDown", "tiny")}</button>
          <button class="foot" aria-label="Add">${this.icon("thinPlus")}</button>
          <button class="foot" aria-label="Settings">${this.icon("gear")}</button>
        </aside>
        <sky-page></sky-page>
        <div class="scroll">
          <button class="step rest" aria-label="Page up">${this.icon("triUp", "tiny")}</button>
          <span class="thumb"></span>
          <button class="step" aria-label="Page down">${this.icon("triDown", "tiny")}</button>
        </div>
      </div>
      <footer class="task">
        <button class="widget">${this.icon("cup", "cup")}<span>AUS - NZ<br /><span class="soft">AUS win</span></span></button>
        <div class="dock">
          ${DOCK.map(d => html`<button class="item ${d.active ? "on" : ""}" aria-label=${d.icon}>
            ${this.icon(d.icon, "big")}${d.badge ? html`<span class="badge">${d.badge}</span>` : nothing}
            ${d.run || d.active ? html`<span class="dash"></span>` : nothing}</button>`)}
        </div>
        <div class="tray">
          ${this.icon("chevUp", "mid")}<span class="eighty">80</span>${this.icon("speaker")}
          <span class="lang">ENG<br />IN</span>
          <span class="net">${this.icon("wifi")}${this.icon("speaker")}${this.icon("battery")}</span>
          <span class="time">08:04 PM<br />28-10-2023</span>${this.icon("bell")}
        </div>
      </footer>`;
  }
}
